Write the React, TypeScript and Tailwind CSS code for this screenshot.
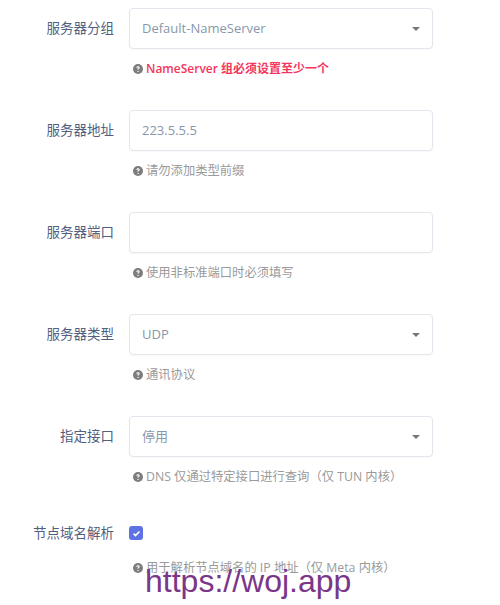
import React from "react";

const font = { fontFamily: '"Open Sans", "Noto Sans CJK SC", sans-serif' };

function HelpIcon() {
  return (
    <svg viewBox="0 0 16 16" className="w-[10px] h-[10px] mr-[3px] shrink-0" fill="#7d7d7d">
      <circle cx="8" cy="8" r="8" />
      <path
        d="M5.4 6.1c0-1.5 1.2-2.5 2.7-2.5s2.6.9 2.6 2.2c0 1-.6 1.6-1.4 2-.5.3-.6.5-.6 1v.4H7.1v-.5c0-.9.4-1.4 1.1-1.8.5-.3.7-.5.7-.9 0-.4-.4-.8-.9-.8-.6 0-1 .4-1 1H5.4z"
        fill="#fff"
      />
      <circle cx="8.1" cy="11.8" r="1.1" fill="#fff" />
    </svg>
  );
}

function Caret() {
  return (
    <svg viewBox="0 0 8 4" className="w-[8px] h-[4px]" fill="#777">
      <path d="M0 0h8L4 4z" />
    </svg>
  );
}

function Help({ text, error }: { text: string; error?: boolean }) {
  return (
    <div className="flex items-center pl-[133px] mt-[11px] h-[18px]">
      <HelpIcon />
      <span
        className={
          error
            ? "text-[12px] font-semibold text-[#f5365c]"
            : "text-[12.3px] text-[#9a9a9a]"
        }
      >
        {text}
      </span>
    </div>
  );
}

function Field({
  label,
  value,
  select,
  help,
  error,
}: {
  label: string;
  value: string;
  select?: boolean;
  help: string;
  error?: boolean;
}) {
  return (
    <div className="mb-[32px]">
      <div className="flex items-center">
        <div className="w-[114px] text-right text-[13.5px] text-[#525f7f]">{label}</div>
        <div className="ml-[15px] w-[304px] h-[41px] rounded-[4px] border border-[#e3e6ec] bg-white flex items-center justify-between px-[12px] shadow-[0_1px_2px_rgba(0,0,0,0.03)]">
          <span className="text-[13px] text-[#8898aa]">{value}</span>
          {select && <Caret />}
        </div>
      </div>
      <Help text={help} error={error} />
    </div>
  );
}

export default function App() {
  return (
    <div className="relative w-[500px] h-[605px] bg-white overflow-hidden pt-[8px]" style={font}>
      <Field
        label="服务器分组"
        value="Default-NameServer"
        select
        help="NameServer 组必须设置至少一个"
        error
      />
      <Field label="服务器地址" value="223.5.5.5" help="请勿添加类型前缀" />
      <Field label="服务器端口" value="" help="使用非标准端口时必须填写" />
      <Field label="服务器类型" value="UDP" select help="通讯协议" />
      <Field label="指定接口" value="停用" select help="DNS 仅通过特定接口进行查询（仅 TUN 内核）" />

      <div>
        <div className="flex items-center h-[30px]">
          <div className="w-[114px] text-right text-[13.5px] text-[#525f7f]">节点域名解析</div>
          <div className="ml-[15px] w-[14px] h-[14px] rounded-[3px] bg-[#5e72e4] flex items-center justify-center">
            <svg viewBox="0 0 10 10" className="w-[9px] h-[9px]" fill="none" stroke="#fff" strokeWidth="1.8">
              <path d="M1.8 5.2l2.1 2.1L8.3 2.8" />
            </svg>
          </div>
        </div>
        <Help text="用于解析节点域名的 IP 地址（仅 Meta 内核）" />
      </div>

      <div
        className="absolute left-[145px] top-[561px] text-[32px] leading-[40px] text-[#7a3689]"
        style={{ fontFamily: '"Liberation Sans", Arial, sans-serif' }}
      >
        https://woj.app
      </div>
    </div>
  );
}
